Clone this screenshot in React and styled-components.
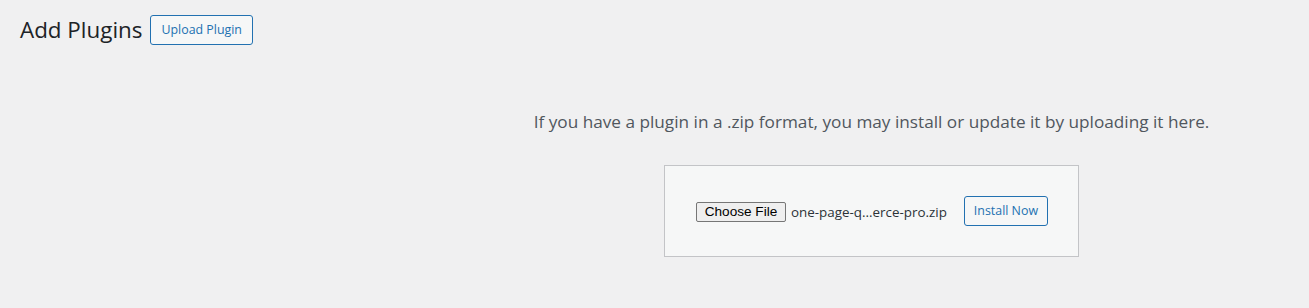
import React from 'react';
import styled, {createGlobalStyle} from 'styled-components';

const GlobalStyle = createGlobalStyle`
    html, body {
        margin: 0;
        padding: 0;
        background: #f0f0f1;
        overflow: hidden;
    }
    body {
        font-family: "Open Sans", "Noto Sans", sans-serif;
        color: #1d2327;
        -webkit-font-smoothing: antialiased;
    }
`;

const Wrap = styled.div`
    padding: 10px 20px 0 20px;
    min-height: 298px;
`;

const Header = styled.div`
    display: flex;
    align-items: center;
    height: 40px;
`;

const Title = styled.h1`
    font-size: 22.4px;
    font-weight: 400;
    line-height: 40px;
    margin: 0;
    padding: 0;
    color: #1d2327;
`;

const OutlineButton = styled.button`
    box-sizing: border-box;
    height: 30px;
    padding: 0 ${props => props.$pad || 10}px;
    margin-left: ${props => props.$offset || 0}px;
    border: 1px solid #2271b1;
    border-radius: 3px;
    background: #f6f7f7;
    color: #2271b1;
    font-family: "Open Sans", "Noto Sans", sans-serif;
    font-size: 12.4px;
    font-weight: 400;
    line-height: 28px;
    white-space: nowrap;
    cursor: pointer;
`;

const UploadSection = styled.div`
    padding-left: 434px;
    text-align: center;
`;

const HelpText = styled.p`
    margin: 0;
    padding-top: 58px;
    font-size: 17.2px;
    line-height: 27px;
    color: #50575e;
`;

const UploadForm = styled.form`
    display: inline-flex;
    align-items: center;
    box-sizing: border-box;
    width: 415px;
    height: 92px;
    margin-top: 30px;
    padding: 0 30px;
    background: #f6f7f7;
    border: 1px solid #c3c4c7;
`;

const FilePicker = styled.div`
    display: flex;
    align-items: center;
    flex: 1;
    padding-top: 1px;
`;

const ChooseButton = styled.span`
    box-sizing: border-box;
    display: inline-flex;
    align-items: center;
    justify-content: center;
    width: 90px;
    height: 20px;
    margin-left: 1px;
    border: 1px solid #767676;
    border-radius: 2px;
    background: #efefef;
    color: #000;
    font-family: "Liberation Sans", Arial, sans-serif;
    font-size: 13.6px;
`;

const FileName = styled.span`
    margin-left: 5px;
    font-size: 13.4px;
    color: #2c3338;
`;

const App = () => {
    return (
        <Wrap>
            <GlobalStyle />
            <Header>
                <Title>Add Plugins</Title>
                <OutlineButton $offset={8} $pad={10}>Upload Plugin</OutlineButton>
            </Header>
            <UploadSection>
                <HelpText>If you have a plugin in a .zip format, you may install or update it by uploading it here.</HelpText>
                <UploadForm onSubmit={e => e.preventDefault()}>
                    <FilePicker>
                        <ChooseButton>Choose File</ChooseButton>
                        <FileName>one-page-q...erce-pro.zip</FileName>
                    </FilePicker>
                    <OutlineButton $pad={9}>Install Now</OutlineButton>
                </UploadForm>
            </UploadSection>
        </Wrap>
    );
};

export default App;
